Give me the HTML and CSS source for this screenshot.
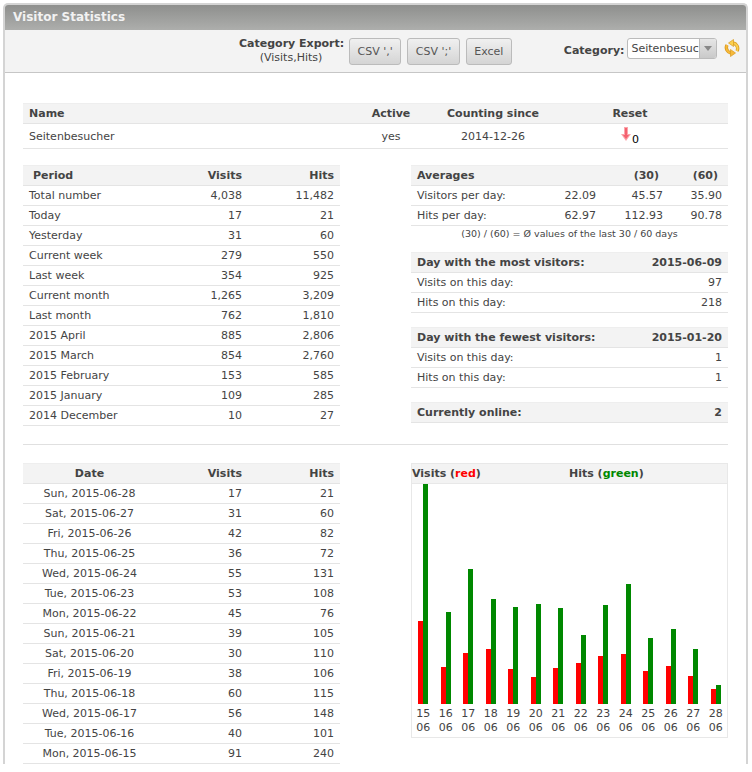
FILE: index.html
```html
<!DOCTYPE html>
<html>
<head>
<meta charset="utf-8">
<title>Visitor Statistics</title>
<link rel="stylesheet" href="styles.css">
</head>
<body>
<div class="window">
  <h1 class="title">Visitor Statistics</h1>

  <div class="toolbar">
    <div class="export-label"><b>Category Export:</b><br>(Visits,Hits)</div>
    <button class="btn">CSV ','</button>
    <button class="btn">CSV ';'</button>
    <button class="btn">Excel</button>
    <b class="cat-label">Category:</b>
    <div class="select">
      <span class="select-text">Seitenbesucher</span>
      <span class="select-arrow"></span>
    </div>
    <svg class="refresh" width="16" height="18" viewBox="0 0 16 18">
      <path d="M9 4 A5.5 5.5 0 0 1 13 12" fill="none" stroke="#d9991f" stroke-width="3.4"/>
      <path d="M9 4 A5.5 5.5 0 0 1 13 12" fill="none" stroke="#fbd04f" stroke-width="2"/>
      <path d="M7 14 A5.5 5.5 0 0 1 3 6" fill="none" stroke="#d9991f" stroke-width="3.4"/>
      <path d="M7 14 A5.5 5.5 0 0 1 3 6" fill="none" stroke="#f6b93a" stroke-width="2"/>
      <path d="M9.5 .5 V7.5 L4.5 4 Z" fill="#fbd04f" stroke="#d9991f" stroke-width=".7"/>
      <path d="M6.5 10.5 V17.5 L11.5 14 Z" fill="#f6b93a" stroke="#d9991f" stroke-width=".7"/>
    </svg>
  </div>

  <div class="content">
    <table class="stat name-table">
      <tr><th class="l name-col">Name</th><th class="c active-col">Active</th><th class="c since-col">Counting since</th><th class="c reset-col">Reset</th><th></th></tr>
      <tr class="tall">
        <td class="l">Seitenbesucher</td>
        <td class="c">yes</td>
        <td class="c">2014-12-26</td>
        <td class="c reset-cell">
          <svg width="10" height="14" viewBox="0 0 10 14">
            <path d="M3 0 H7 V7 H10 L5 14 L0 7 H3 Z" fill="#fba5ab"/>
            <path d="M4 1 H6 V8 H8 L5 12 L2 8 H4 Z" fill="#f4616f"/>
          </svg><span class="reset-num">0</span>
        </td>
        <td></td>
      </tr>
    </table>

    <div class="columns">
      <table class="stat half">
        <tr><th class="period-col">Period</th><th class="r num-col">Visits</th><th class="r num-col">Hits</th></tr>
        <tr><td>Total number</td><td class="r">4,038</td><td class="r">11,482</td></tr>
        <tr><td>Today</td><td class="r">17</td><td class="r">21</td></tr>
        <tr><td>Yesterday</td><td class="r">31</td><td class="r">60</td></tr>
        <tr><td>Current week</td><td class="r">279</td><td class="r">550</td></tr>
        <tr><td>Last week</td><td class="r">354</td><td class="r">925</td></tr>
        <tr><td>Current month</td><td class="r">1,265</td><td class="r">3,209</td></tr>
        <tr><td>Last month</td><td class="r">762</td><td class="r">1,810</td></tr>
        <tr><td>2015 April</td><td class="r">885</td><td class="r">2,806</td></tr>
        <tr><td>2015 March</td><td class="r">854</td><td class="r">2,760</td></tr>
        <tr><td>2015 February</td><td class="r">153</td><td class="r">585</td></tr>
        <tr><td>2015 January</td><td class="r">109</td><td class="r">285</td></tr>
        <tr><td>2014 December</td><td class="r">10</td><td class="r">27</td></tr>
      </table>

      <div class="half">
        <table class="stat averages">
          <tr><th class="l avg-label">Averages</th><th class="avg-a"></th><th class="r paren avg-b">(30)</th><th class="r paren avg-c">(60)</th></tr>
          <tr><td>Visitors per day:</td><td class="r">22.09</td><td class="r">45.57</td><td class="r">35.90</td></tr>
          <tr><td>Hits per day:</td><td class="r">62.97</td><td class="r">112.93</td><td class="r">90.78</td></tr>
        </table>
        <div class="note">(30) / (60) = Ø values of the last 30 / 60 days</div>

        <table class="stat most">
          <tr><th class="l">Day with the most visitors:</th><th class="r">2015-06-09</th></tr>
          <tr><td>Visits on this day:</td><td class="r">97</td></tr>
          <tr><td>Hits on this day:</td><td class="r">218</td></tr>
        </table>

        <table class="stat block">
          <tr><th class="l">Day with the fewest visitors:</th><th class="r">2015-01-20</th></tr>
          <tr><td>Visits on this day:</td><td class="r">1</td></tr>
          <tr><td>Hits on this day:</td><td class="r">1</td></tr>
        </table>

        <table class="stat block">
          <tr><th class="l">Currently online:</th><th class="r">2</th></tr>
        </table>
      </div>
    </div>

    <hr class="rule">

    <div class="columns">
      <table class="stat half daily">
        <tr><th class="c">Date</th><th class="r num-col">Visits</th><th class="r num-col">Hits</th></tr>
        <tr><td class="c">Sun, 2015-06-28</td><td class="r">17</td><td class="r">21</td></tr>
        <tr><td class="c">Sat, 2015-06-27</td><td class="r">31</td><td class="r">60</td></tr>
        <tr><td class="c">Fri, 2015-06-26</td><td class="r">42</td><td class="r">82</td></tr>
        <tr><td class="c">Thu, 2015-06-25</td><td class="r">36</td><td class="r">72</td></tr>
        <tr><td class="c">Wed, 2015-06-24</td><td class="r">55</td><td class="r">131</td></tr>
        <tr><td class="c">Tue, 2015-06-23</td><td class="r">53</td><td class="r">108</td></tr>
        <tr><td class="c">Mon, 2015-06-22</td><td class="r">45</td><td class="r">76</td></tr>
        <tr><td class="c">Sun, 2015-06-21</td><td class="r">39</td><td class="r">105</td></tr>
        <tr><td class="c">Sat, 2015-06-20</td><td class="r">30</td><td class="r">110</td></tr>
        <tr><td class="c">Fri, 2015-06-19</td><td class="r">38</td><td class="r">106</td></tr>
        <tr><td class="c">Thu, 2015-06-18</td><td class="r">60</td><td class="r">115</td></tr>
        <tr><td class="c">Wed, 2015-06-17</td><td class="r">56</td><td class="r">148</td></tr>
        <tr><td class="c">Tue, 2015-06-16</td><td class="r">40</td><td class="r">101</td></tr>
        <tr><td class="c">Mon, 2015-06-15</td><td class="r">91</td><td class="r">240</td></tr>
      </table>

      <div class="half chart">
        <div class="chart-head">
          <span class="legend-visits">Visits (<span class="red">red</span>)</span>
          <span>Hits (<span class="green">green</span>)</span>
        </div>
        <div class="bars">
          <div class="day"><div class="pair"><i class="bar v" style="height:83px"></i><i class="bar h" style="height:220px"></i></div>15<br>06</div>
          <div class="day"><div class="pair"><i class="bar v" style="height:37px"></i><i class="bar h" style="height:92px"></i></div>16<br>06</div>
          <div class="day"><div class="pair"><i class="bar v" style="height:51px"></i><i class="bar h" style="height:135px"></i></div>17<br>06</div>
          <div class="day"><div class="pair"><i class="bar v" style="height:55px"></i><i class="bar h" style="height:105px"></i></div>18<br>06</div>
          <div class="day"><div class="pair"><i class="bar v" style="height:35px"></i><i class="bar h" style="height:97px"></i></div>19<br>06</div>
          <div class="day"><div class="pair"><i class="bar v" style="height:27px"></i><i class="bar h" style="height:100px"></i></div>20<br>06</div>
          <div class="day"><div class="pair"><i class="bar v" style="height:36px"></i><i class="bar h" style="height:96px"></i></div>21<br>06</div>
          <div class="day"><div class="pair"><i class="bar v" style="height:41px"></i><i class="bar h" style="height:69px"></i></div>22<br>06</div>
          <div class="day"><div class="pair"><i class="bar v" style="height:48px"></i><i class="bar h" style="height:99px"></i></div>23<br>06</div>
          <div class="day"><div class="pair"><i class="bar v" style="height:50px"></i><i class="bar h" style="height:120px"></i></div>24<br>06</div>
          <div class="day"><div class="pair"><i class="bar v" style="height:33px"></i><i class="bar h" style="height:66px"></i></div>25<br>06</div>
          <div class="day"><div class="pair"><i class="bar v" style="height:38px"></i><i class="bar h" style="height:75px"></i></div>26<br>06</div>
          <div class="day"><div class="pair"><i class="bar v" style="height:28px"></i><i class="bar h" style="height:55px"></i></div>27<br>06</div>
          <div class="day"><div class="pair"><i class="bar v" style="height:15px"></i><i class="bar h" style="height:19px"></i></div>28<br>06</div>
        </div>
      </div>
    </div>
  </div>
</div>
</body>
</html>
```

FILE: styles.css
```css
html, body {
   height: 100%;
   overflow: hidden;
}

body {
   margin: 0;
   padding: 3px 4px 0 3px;
   box-sizing: border-box;
   background-color: white;
   font-family: "DejaVu Sans", sans-serif;
   font-size: 11px;
   color: #444;
}

.window {
   border: 2px solid #d4d4d4;
   border-bottom: none;
   border-radius: 5px 5px 0 0;
   background-color: white;
}

.title {
   margin: 0;
   height: 25px;
   padding-left: 8px;
   font-size: 12px;
   line-height: 24px;
   color: #f2f2f2;
   background: linear-gradient(#8e8f8d, #adaeac);
   border-radius: 3px 3px 0 0;
}

.toolbar {
   display: flex;
   align-items: center;
   height: 43px;
   box-sizing: border-box;
   background-color: #f3f3f3;
   border-bottom: 1px solid #c6c6c6;
}

.export-label {
   margin-left: 234px;
   width: 104px;
   flex: none;
   white-space: nowrap;
   text-align: center;
   line-height: 14px;
}

.btn {
   height: 27px;
   margin-left: 6px;
   padding: 0 7.5px;
   font-family: inherit;
   font-size: 11px;
   color: #555;
   background: linear-gradient(#f0f0f0, #d4d4d4);
   border: 1px solid #bbb;
   border-radius: 3px;
}

.cat-label {
   margin-left: 52px;
   margin-bottom: 1px;
}

.select {
   display: flex;
   width: 90px;
   height: 21px;
   box-sizing: border-box;
   margin-left: 3px;
   margin-bottom: 5px;
   background: white;
   border: 1px solid #bbb;
   border-radius: 3px;
   overflow: hidden;
}

.select-text {
   flex: 1;
   padding-left: 3px;
   overflow: hidden;
   white-space: nowrap;
   line-height: 19px;
}

.select-arrow {
   position: relative;
   width: 16px;
   flex: none;
   background: linear-gradient(#e6e6e6, #c9c9c9);
   border-left: 1px solid #bbb;
}

.select-arrow::after {
   content: "";
   position: absolute;
   left: 4px;
   top: 7px;
   border: 4px solid transparent;
   border-top: 5px solid #888;
   border-bottom: none;
}

.refresh {
   margin-left: 7px;
   margin-bottom: 6px;
}

.content {
   padding: 30px 18px 0 18px;
}

.stat {
   border-collapse: collapse;
   width: 100%;
}

.stat th {
   height: 20px;
   padding: 0 6px;
   background-color: #f3f3f3;
   border-top: 1px solid #eee;
   border-bottom: 1px solid #e4e4e4;
   text-align: left;
   box-sizing: border-box;
}

.stat td {
   height: 20px;
   padding: 0 6px;
   border-bottom: 1px solid #e4e4e4;
   box-sizing: border-box;
}

.stat .l { text-align: left; }
.stat .c { text-align: center; }
.stat .r { text-align: right; }

.stat .tall td {
   height: 25px;
}

.name-table {
   table-layout: fixed;
}

.name-col { width: 338px; }
.active-col { width: 60px; }
.since-col { width: 144px; }
.reset-col { width: 130px; }

.reset-cell svg {
   vertical-align: -1px;
}

.reset-num {
   margin-left: 1px;
   color: black;
   vertical-align: -3px;
}

.columns {
   display: flex;
   justify-content: space-between;
   margin-top: 16px;
}

.half {
   width: 317px;
   flex: none;
}

.stat.half {
   table-layout: fixed;
}

.stat .period-col {
   padding-left: 10px;
}

.num-col { width: 92px; }

.averages {
   table-layout: fixed;
}

.avg-a { width: 60px; }
.avg-b { width: 67px; }
.avg-c { width: 59px; }

.stat .paren {
   padding-right: 10px;
}

.note {
   height: 20px;
   font-size: 9.5px;
   line-height: 15px;
   text-align: center;
}

.most {
   margin-top: 6px;
}

.block {
   margin-top: 14px;
}

.rule {
   height: 0;
   margin: 18px 0 0;
   border: none;
   border-top: 1px solid #e0e0e0;
}

.rule + .columns {
   margin-top: 18px;
}

.chart {
   height: 275px;
   box-sizing: border-box;
   border: 1px solid #e8e8e8;
}

.chart-head {
   display: flex;
   height: 20px;
   box-sizing: border-box;
   background-color: #f3f3f3;
   border-bottom: 1px solid #e8e8e8;
   font-weight: bold;
   line-height: 19px;
}

.legend-visits {
   width: 157px;
}

.red { color: #f00; }
.green { color: #080; }

.bars {
   display: flex;
}

.day {
   flex: 1;
   text-align: center;
   line-height: 14px;
}

.pair {
   display: flex;
   justify-content: center;
   align-items: flex-end;
   height: 220px;
   margin-bottom: 3px;
}

.bar {
   width: 5px;
}

.bar.v { background-color: #f00; }
.bar.h { background-color: #080; }
```
